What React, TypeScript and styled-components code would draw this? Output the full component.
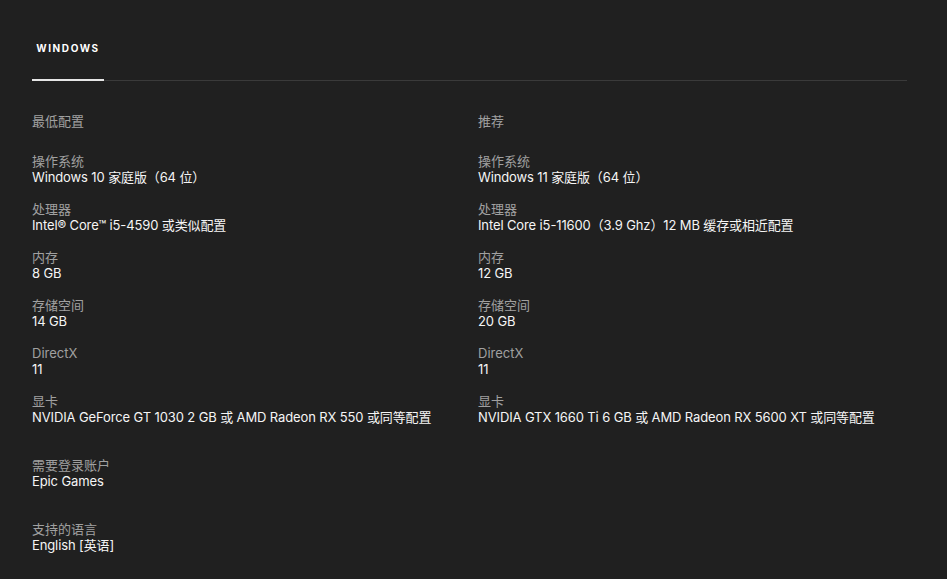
import React from 'react';
import styled, { createGlobalStyle } from 'styled-components';

const GlobalStyle = createGlobalStyle`
  html, body {
    margin: 0;
    padding: 0;
    background: #202020;
  }
  body {
    font-family: Inter, "Noto Sans CJK SC", sans-serif;
    -webkit-font-smoothing: antialiased;
  }
`;

type Spec = { label: string; value: string };

const minimum: Spec[] = [
  { label: '操作系统', value: 'Windows 10 家庭版（64 位）' },
  { label: '处理器', value: 'Intel® Core™ i5-4590 或类似配置' },
  { label: '内存', value: '8 GB' },
  { label: '存储空间', value: '14 GB' },
  { label: 'DirectX', value: '11' },
  { label: '显卡', value: 'NVIDIA GeForce GT 1030 2 GB 或 AMD Radeon RX 550 或同等配置' },
];

const recommended: Spec[] = [
  { label: '操作系统', value: 'Windows 11 家庭版（64 位）' },
  { label: '处理器', value: 'Intel Core i5-11600（3.9 Ghz）12 MB 缓存或相近配置' },
  { label: '内存', value: '12 GB' },
  { label: '存储空间', value: '20 GB' },
  { label: 'DirectX', value: '11' },
  { label: '显卡', value: 'NVIDIA GTX 1660 Ti 6 GB 或 AMD Radeon RX 5600 XT 或同等配置' },
];

const extra: Spec[] = [
  { label: '需要登录账户', value: 'Epic Games' },
  { label: '支持的语言', value: 'English [英语]' },
];

const SpecColumn = ({ title, items }: { title: string; items: Spec[] }) => (
  <Column>
    <ColumnTitle>{title}</ColumnTitle>
    {items.map((item) => (
      <Item key={item.label}>
        <Label>{item.label}</Label>
        <Value>{item.value}</Value>
      </Item>
    ))}
  </Column>
);

const App = () => {
  return (
    <Page>
      <GlobalStyle />
      <Tabs>
        <Tab $active>WINDOWS</Tab>
      </Tabs>
      <Columns>
        <SpecColumn title="最低配置" items={minimum} />
        <SpecColumn title="推荐" items={recommended} />
      </Columns>
      <Extra>
        {extra.map((item) => (
          <ExtraItem key={item.label}>
            <Label>{item.label}</Label>
            <Value>{item.value}</Value>
          </ExtraItem>
        ))}
      </Extra>
    </Page>
  );
};

export default App;

const Page = styled.div`
  min-height: 579px;
  box-sizing: border-box;
  padding: 32px 40px 0 32px;
  background: #202020;
`;

const Tabs = styled.div`
  display: flex;
  border-bottom: 1px solid #3a3a3a;
`;

const Tab = styled.div<{ $active?: boolean }>`
  width: 72px;
  height: 49px;
  box-sizing: border-box;
  padding-top: 10px;
  text-align: center;
  font-size: 10px;
  font-weight: 700;
  letter-spacing: 1.6px;
  color: #ffffff;
  border-bottom: 2px solid ${(p) => (p.$active ? '#e6e6e6' : 'transparent')};
  margin-bottom: -1px;
`;

const Columns = styled.div`
  display: grid;
  grid-template-columns: 446px 1fr;
  padding-top: 32px;
`;

const Column = styled.div`
  display: flex;
  flex-direction: column;
`;

const ColumnTitle = styled.div`
  font-size: 13px;
  line-height: 16px;
  color: #a0a0a0;
  margin-bottom: 24px;
`;

const Item = styled.div`
  display: flex;
  flex-direction: column;
  margin-bottom: 16px;
`;

const Label = styled.div`
  font-size: 13px;
  line-height: 16px;
  color: #a0a0a0;
`;

const Value = styled.div`
  font-size: 13px;
  line-height: 16px;
  letter-spacing: -0.12px;
  color: #f5f5f5;
`;

const Extra = styled.div`
  display: flex;
  flex-direction: column;
  padding-top: 16px;
`;

const ExtraItem = styled.div`
  display: flex;
  flex-direction: column;
  margin-bottom: 32px;
`;
